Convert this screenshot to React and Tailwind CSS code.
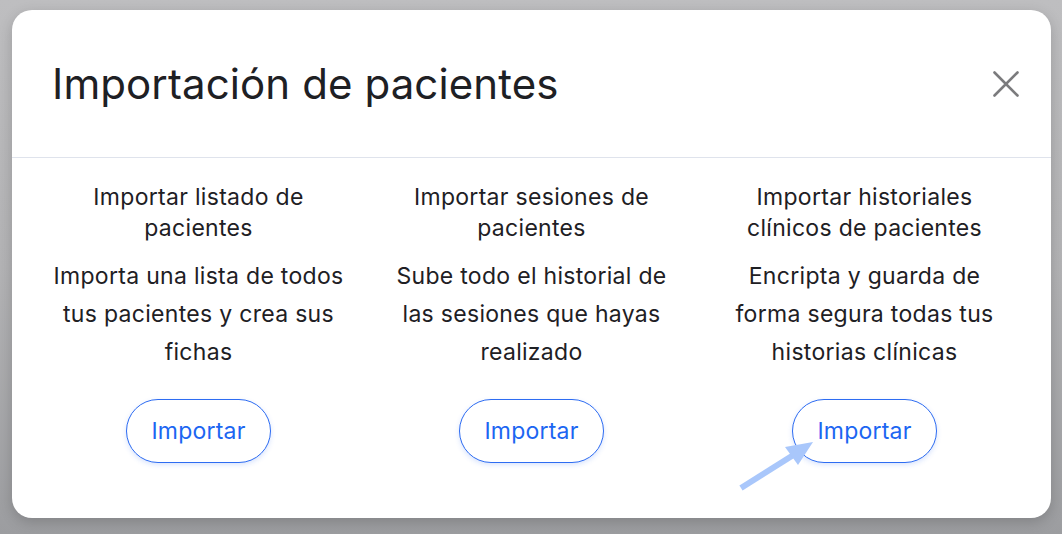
const options = [
  {
    title: 'Importar listado de pacientes',
    text: 'Importa una lista de todos tus pacientes y crea sus fichas',
  },
  {
    title: 'Importar sesiones de pacientes',
    text: 'Sube todo el historial de las sesiones que hayas realizado',
  },
  {
    title: 'Importar historiales clínicos de pacientes',
    text: 'Encripta y guarda de forma segura todas tus historias clínicas',
  },
]

function ImportOption({ title, text }) {
  return (
    <div className="flex flex-col items-center text-center">
      <h3 className="max-w-[298px] text-[23px] leading-[31px] tracking-[0.3px] text-[#1e2024]">{title}</h3>
      <p className="mt-[13px] max-w-[298px] text-[23px] leading-[38px] tracking-[0.3px] text-[#1e2024]">{text}</p>
      <button className="mt-[28px] h-[64px] w-[145px] rounded-full border border-[#2d6cf2] bg-white text-[23px] tracking-[0.2px] text-[#1c66f2] shadow-[0_2px_5px_rgba(45,108,242,0.18)]">
        Importar
      </button>
    </div>
  )
}

export default function App() {
  return (
    <div
      className="relative h-[534px] w-[1062px] overflow-hidden bg-gradient-to-b from-[#bebec0] via-[#b3b3b5] to-[#9c9da0] pl-[12px] pt-[10px]"
      style={{ fontFamily: 'Inter, "Noto Sans", sans-serif' }}
    >
      <div className="h-[508px] w-[1039px] rounded-[20px] bg-white shadow-[0_4px_14px_rgba(0,0,0,0.18)]">
        {/* Header */}
        <div className="flex h-[148px] items-center justify-between border-b border-[#dfe3ec] pl-[40px] pr-[32px]">
          <h2 className="text-[42px] font-normal tracking-[0.1px] text-[#1e2024]">Importación de pacientes</h2>
          <button className="flex h-[26px] w-[26px] items-center justify-center text-[#7b7b7d]">
            <svg width="26" height="26" viewBox="0 0 26 26" fill="none" stroke="currentColor" strokeWidth="2.6" strokeLinecap="round">
              <path d="M1.5 1.5 24.5 24.5M24.5 1.5 1.5 24.5" />
            </svg>
          </button>
        </div>

        {/* Options */}
        <div className="grid grid-cols-3 px-[20px] pt-[24px]">
          {options.map((o) => (
            <ImportOption key={o.title} {...o} />
          ))}
        </div>
      </div>

      {/* annotation arrow */}
      <svg className="absolute left-0 top-0" width="1062" height="534" viewBox="0 0 1062 534">
        <line x1="741" y1="488" x2="795" y2="454" stroke="#a9c7fb" strokeWidth="6" />
        <polygon points="813,442 785,447 798,465" fill="#a9c7fb" />
      </svg>
    </div>
  )
}
